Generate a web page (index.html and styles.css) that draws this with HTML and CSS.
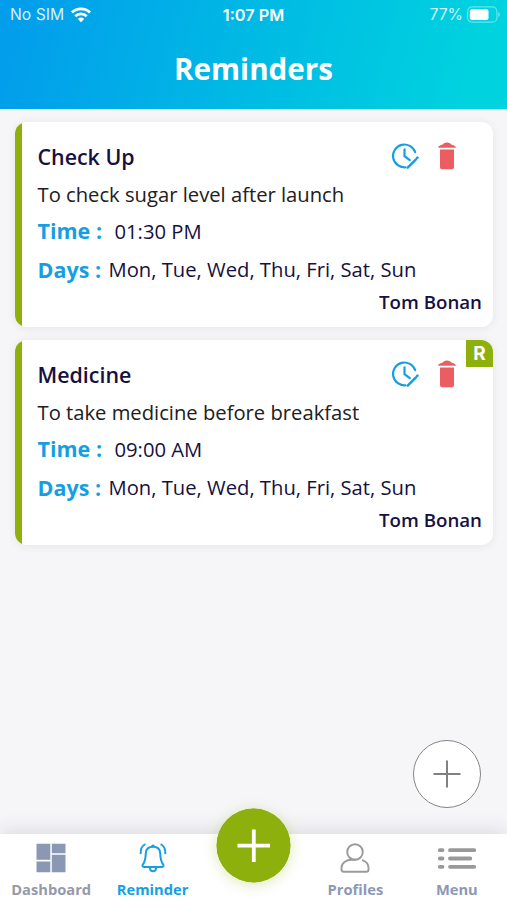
FILE: index.html
```html
<!DOCTYPE html>
<html lang="en">
<head>
<meta charset="utf-8">
<title>Reminders</title>
<link rel="stylesheet" href="styles.css">
</head>
<body>
<svg class="defs" width="0" height="0" aria-hidden="true">
  <symbol id="clock-edit" viewBox="0 0 28 28">
    <g fill="none" stroke="#159fe3" stroke-width="2.200" stroke-linecap="round">
      <path d="M24.200 10.200A11.400 11.400 0 1 0 14.400 25.300"/>
      <path d="M13.500 7.300v6.800l5.300 4"/>
      <path d="M16.700 25.600l8-8M26.100 16l.4-.4" stroke-width="2.500"/>
    </g>
  </symbol>
  <symbol id="trash" viewBox="0 0 18 28">
    <path fill="#eb5d60" d="M.2 5.800C.2 4.400 1.200 3.800 2.500 3.300L4.700 2.500C5.500 1.100 7 .4 9 .4s3.500.7 4.300 2.100l2.200.8c1.300.5 2.300 1.100 2.300 2.500zM2 7.500h14v17.800a2 2 0 0 1-2 2H4a2 2 0 0 1-2-2z"/>
  </symbol>
</svg>
<div class="screen">
  <header class="header">
    <div class="status">
      <div class="carrier">
        <span>No SIM</span>
        <svg width="20" height="16" viewBox="0 0 20 16"><g fill="none" stroke="#fff" stroke-width="2.800"><path d="M1 5.600a12.700 12.700 0 0 1 18 0"/><path d="M4.300 9.200a8.100 8.100 0 0 1 11.400 0"/></g><path fill="#fff" d="M6.800 12a4.700 4.700 0 0 1 6.400 0L10 15.300z"/></svg>
      </div>
      <span class="clock">1:07 PM</span>
      <div class="battery">
        <span>77%</span>
        <svg width="33" height="17" viewBox="0 0 33 17"><rect x=".6" y=".8" width="29.300" height="15.400" rx="4.500" fill="none" stroke="#fff" stroke-opacity=".4" stroke-width="1.200"/><rect x="2.800" y="3" width="18.700" height="11" rx="2.500" fill="#fff"/><path d="M31.300 6v5q1.500-.8 1.500-2.500T31.300 6" fill="#fff" fill-opacity=".45"/></svg>
      </div>
    </div>
    <h1 class="title">Reminders</h1>
  </header>
  <main class="list">
    <article class="card">
      <div class="card-head">
        <h2 class="name">Check Up</h2>
        <svg class="edit"><use href="#clock-edit"/></svg>
        <svg class="trash"><use href="#trash"/></svg>
      </div>
      <p class="desc">To check sugar level after launch</p>
      <p class="row time"><b>Time :</b><span>01:30 PM</span></p>
      <p class="row days"><b>Days :</b><span>Mon, Tue, Wed, Thu, Fri, Sat, Sun</span></p>
      <p class="owner">Tom Bonan</p>
    </article>
    <article class="card">
      <span class="badge">R</span>
      <div class="card-head">
        <h2 class="name">Medicine</h2>
        <svg class="edit"><use href="#clock-edit"/></svg>
        <svg class="trash"><use href="#trash"/></svg>
      </div>
      <p class="desc">To take medicine before breakfast</p>
      <p class="row time"><b>Time :</b><span>09:00 AM</span></p>
      <p class="row days"><b>Days :</b><span>Mon, Tue, Wed, Thu, Fri, Sat, Sun</span></p>
      <p class="owner">Tom Bonan</p>
    </article>
  </main>
  <button class="add" aria-label="Add reminder"><svg width="28" height="28" viewBox="0 0 28 28"><path d="M14 .5v27M.5 14h27" stroke="#808080" stroke-width="2"/></svg></button>
  <nav class="tabs">
    <a class="tab"><svg width="30" height="30" viewBox="0 0 30 30"><path fill="#8b98b3" d="M.5.8h13.800v16H.5zM15.800.8h13.700v9.400H15.800zM.5 18.400h13.800v10.800H.5zM15.800 11.800h13.700v17.400H15.800z"/></svg><span class="gray">Dashboard</span></a>
    <a class="tab active"><svg width="30" height="30" viewBox="0 0 30 30"><g fill="none" stroke="#159fe3" stroke-width="2" stroke-linecap="round" stroke-linejoin="round"><path d="M14.200 3.300a.8.800 0 0 1 1.600 0"/><path d="M15 3.800c-4.800 0-7 2.400-7.200 6.500-.2 5.500-.7 8.200-2.700 10.800-1.200 1.600-.6 2.800 1 2.800h17.800c1.600 0 2.200-1.200 1-2.800-2-2.600-2.500-5.300-2.700-10.800-.2-4.100-2.400-6.500-7.200-6.500z"/><path d="M11.900 24.500c.2 5 6 5 6.200 0M6.700 1.500C3.800 3.300 2.600 6.300 2.700 10.300M23.300 1.500c2.900 1.800 4.100 4.800 4 8.800"/></g></svg><span>Reminder</span></a>
    <a class="tab center" aria-label="Add"><svg class="fab" width="75" height="75" viewBox="0 0 75 75"><circle cx="37.500" cy="37.500" r="37.200" fill="#8eb00c"/><path d="M37.800 21.500v32.500M21.500 37.700h32.500" stroke="#fff" stroke-width="3.800"/></svg></a>
    <a class="tab"><svg width="30" height="30" viewBox="0 0 30 30"><g fill="none" stroke="#9a9a9a" stroke-width="1.900" stroke-linecap="round"><circle cx="15" cy="9" r="7.800"/><path d="M22.800 17.300c3.600 1.300 5.700 4.100 5.700 7.700v1.700c0 1.100-.9 2-2 2h-23c-1.100 0-2-.9-2-2V25c0-5 4.500-8.200 10.300-8.200H15"/></g></svg><span>Profiles</span></a>
    <a class="tab"><svg width="40" height="30" viewBox="0 0 40 30"><path d="M2.800 7.200h2.700M13 7.200h24.300M2.800 15.500h2.700M13 15.500h20.300M2.800 23.800h2.700M13 23.800h24.300" stroke="#999" stroke-width="3.800" stroke-linecap="round"/></svg><span>Menu</span></a>
  </nav>
</div>
</body>
</html>
```
FILE: styles.css
```css
* { box-sizing: border-box; }
body { margin: 0; font-family: "Open Sans", sans-serif; color: #16113f; }
h1, h2, p { margin: 0; }
.defs { position: absolute; }
.screen { width: 507px; height: 900px; display: flex; flex-direction: column; background: #f6f6f9; overflow: hidden; position: relative; }
.header { height: 108.500px; flex: none; background: linear-gradient(105deg, #029eeb 5%, #00bae4 50%, #00d3df 93%); color: #fff; }
.status { height: 30px; padding: 0 7px 0 10px; display: grid; grid-template-columns: 1fr auto 1fr; align-items: center; font-family: Inter, sans-serif; font-size: 15.700px; line-height: 30px; }
.carrier, .battery { display: flex; align-items: center; gap: 7px; color: #d5f1fc; }
.battery { justify-content: flex-end; gap: 4px; }
.carrier svg, .battery svg { margin-bottom: 1px; }
.clock { font-weight: 600; font-size: 16.300px; margin-left: -3px; }
.title { font-size: 29.600px; line-height: 40px; margin-top: 19px; text-align: center; font-weight: 700; }
.list { padding: 13.500px 14px 0 14.500px; display: flex; flex-direction: column; gap: 13.500px; flex: 1; }
.card { position: relative; height: 204.500px; background: linear-gradient(to right, #8eb00c 7px, #fff 7px); border-radius: 12px; padding: 19px 11px 0 23px; box-shadow: 0 1px 8px rgba(50, 50, 70, .09); }
.card-head { display: flex; height: 34px; align-items: flex-start; }
.name { flex: 1; font-size: 21.400px; font-weight: 600; line-height: 32px; }
.edit { width: 28px; height: 28px; margin-right: 19px; margin-top: .5px; }
.trash { width: 18px; height: 28px; margin-right: 26px; margin-top: 1px; }
.desc { font-size: 20.220px; line-height: 38px; color: #202020; }
.row { display: flex; font-size: 20.200px; line-height: 38px; }
.row b { color: #159fe3; font-size: 21.500px; }
.time { height: 37px; }
.time span { line-height: 37px; }
.time b { width: 77px; line-height: 35px; }
.days { height: 39px; }
.days span { line-height: 39px; }
.days b { width: 71px; line-height: 39px; }
.owner { text-align: right; font-size: 18.700px; font-weight: 600; line-height: 26px; }
.badge { position: absolute; top: 0; right: 0; width: 27px; height: 27px; background: #8eb00c; border-top-right-radius: 12px; color: #fff; font: 700 19px/27px Inter, sans-serif; text-align: center; }
.add { position: absolute; left: 412.500px; top: 740px; width: 68px; height: 68px; border: 1.500px solid #858585; border-radius: 50%; background: #fff; padding: 0; display: grid; place-items: center; }
.tabs { height: 66px; flex: none; background: #fff; display: grid; grid-template-columns: repeat(5, 1fr); box-shadow: 0 -3px 18px rgba(40, 40, 60, .13); }
.tab { display: flex; flex-direction: column; align-items: center; padding-top: 9px; padding-left: 1px; color: #8c98b6; font-size: 14.700px; font-weight: 700; line-height: 22px; gap: 5px; }
.gray { color: #959aaa; }
.active { color: #159fe3; }
.center { padding: 0; }
.fab { margin-top: -26px; margin-left: 1px; border-radius: 50%; box-shadow: 0 2px 14px rgba(142, 176, 12, .28); }
```
